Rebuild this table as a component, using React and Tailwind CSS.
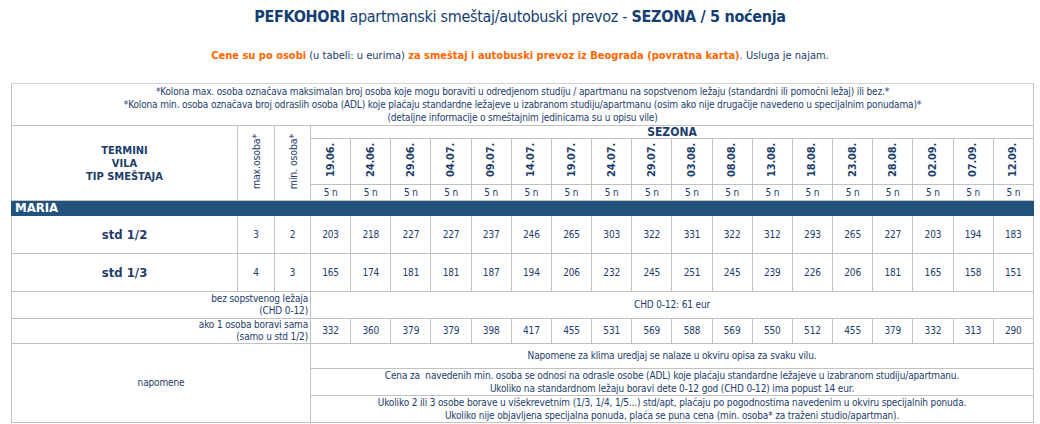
import React from "react";

const dates = ["19.06.","24.06.","29.06.","04.07.","09.07.","14.07.","19.07.","24.07.","29.07.","03.08.","08.08.","13.08.","18.08.","23.08.","28.08.","02.09.","07.09.","12.09."];
const r1 = [203,218,227,227,237,246,265,303,322,331,322,312,293,265,227,203,194,183];
const r2 = [165,174,181,181,187,194,206,232,245,251,245,239,226,206,181,165,158,151];
const r3 = [332,360,379,379,398,417,455,531,569,588,569,550,512,455,379,332,313,290];

const B = "border border-[#c2c2c2] p-0";

export default function App() {
  return (
    <div className="w-[1040px] h-[424px] bg-white overflow-hidden font-['DejaVu_Sans_Condensed','DejaVu_Sans',sans-serif] text-[#1d3d6b]">
      <div className="pt-[6px] h-[42px] text-center text-[16px] tracking-[-0.3px] text-[#133e6f] leading-[22px]">
        <b>PEFKOHORI</b> apartmanski smeštaj/autobuski prevoz - <b>SEZONA / 5 noćenja</b>
      </div>
      <div className="h-[41px] text-center text-[11px] leading-[14px] pt-[7px]">
        <b className="text-[#ff6600]">Cene su po osobi</b> (u tabeli: u eurima) <b className="text-[#ff6600]">za smeštaj i autobuski prevoz iz Beograda (povratna karta)</b>. Usluga je najam.
      </div>
      <table className="ml-[11px] w-[1023px] table-fixed border-collapse text-[10px] tracking-[-0.15px] leading-[12px] text-center">
        <colgroup>
          <col className="w-[226px]" />
          <col className="w-[37px]" />
          <col className="w-[36px]" />
          {dates.map((d) => <col key={d} />)}
        </colgroup>
        <tbody>
          <tr className="h-[42px]">
            <td colSpan={21} className={`${B} leading-[13px] border-t-[#d2d2d2]`}>
              *Kolona max. osoba označava maksimalan broj osoba koje mogu boraviti u odredjenom studiju / apartmanu na sopstvenom ležaju (standardni ili pomoćni ležaj) ili bez.*<br />
              *Kolona min. osoba označava broj odraslih osoba (ADL) koje plaćaju standardne ležajeve u izabranom studiju/apartmanu (osim ako nije drugačije navedeno u specijalnim ponudama)*<br />
              (detaljne informacije o smeštajnim jedinicama su u opisu vile)
            </td>
          </tr>
          <tr className="h-[13px]">
            <td rowSpan={3} className={`${B} font-bold text-[11px] tracking-normal leading-[13px]`}>TERMINI<br />VILA<br />TIP SMEŠTAJA</td>
            <td rowSpan={3} className={B}>
              <span className="inline-block [writing-mode:vertical-rl] rotate-180 text-[10.5px]">max.osoba*</span>
            </td>
            <td rowSpan={3} className={B}>
              <span className="inline-block [writing-mode:vertical-rl] rotate-180 text-[10.5px]">min. osoba*</span>
            </td>
            <td colSpan={18} className={`${B} font-bold text-[12px] tracking-normal leading-[12px]`}>SEZONA</td>
          </tr>
          <tr className="h-[46px]">
            {dates.map((d) => (
              <td key={d} className={B}>
                <span className="inline-block [writing-mode:vertical-rl] rotate-180 font-bold text-[11px] tracking-[-0.2px] leading-[14px]">{d}</span>
              </td>
            ))}
          </tr>
          <tr className="h-[16px]">
            {dates.map((d) => (
              <td key={d} className={B}>5 n</td>
            ))}
          </tr>
          <tr className="h-[15px]">
            <td colSpan={21} className="bg-[#23527c] text-white font-bold text-[13px] tracking-normal leading-[14px] text-left pl-[3px] p-0 border border-[#23527c]">MARIA</td>
          </tr>
          <tr className="h-[38px]">
            <td className={`${B} font-bold text-[13px] tracking-normal`}>std 1/2</td>
            <td className={B}>3</td>
            <td className={B}>2</td>
            {r1.map((v, i) => <td key={i} className={B}>{v}</td>)}
          </tr>
          <tr className="h-[38px]">
            <td className={`${B} font-bold text-[13px] tracking-normal`}>std 1/3</td>
            <td className={B}>4</td>
            <td className={B}>3</td>
            {r2.map((v, i) => <td key={i} className={B}>{v}</td>)}
          </tr>
          <tr className="h-[27px]">
            <td colSpan={3} className={`${B} text-right pr-[2px]`}>bez sopstvenog ležaja<br />(CHD 0-12)</td>
            <td colSpan={18} className={B}>CHD 0-12: 61 eur</td>
          </tr>
          <tr className="h-[25px]">
            <td colSpan={3} className={`${B} text-right pr-[2px]`}>ako 1 osoba boravi sama<br />(samo u std 1/2)</td>
            {r3.map((v, i) => <td key={i} className={B}>{v}</td>)}
          </tr>
          <tr className="h-[25px]">
            <td colSpan={3} rowSpan={3} className={B}>napomene</td>
            <td colSpan={18} className={B}>Napomene za klima uredjaj se nalaze u okviru opisa za svaku vilu.</td>
          </tr>
          <tr className="h-[25px]">
            <td colSpan={18} className={`${B} border-t-[#d2d2d2] leading-[13px]`}>Cena za &nbsp;navedenih min. osoba se odnosi na odrasle osobe (ADL) koje plaćaju standardne ležajeve u izabranom studiju/apartmanu.<br />Ukoliko na standardnom ležaju boravi dete 0-12 god (CHD 0-12) ima popust 14 eur.</td>
          </tr>
          <tr className="h-[26px]">
            <td colSpan={18} className={`${B} border-t-[#d2d2d2] leading-[13px]`}>Ukoliko 2 ili 3 osobe borave u višekrevetnim (1/3, 1/4, 1/5...) std/apt, plaćaju po pogodnostima navedenim u okviru specijalnih ponuda.<br />Ukoliko nije objavljena specijalna ponuda, plaća se puna cena (min. osoba* za traženi studio/apartman).</td>
          </tr>
        </tbody>
      </table>
    </div>
  );
}
